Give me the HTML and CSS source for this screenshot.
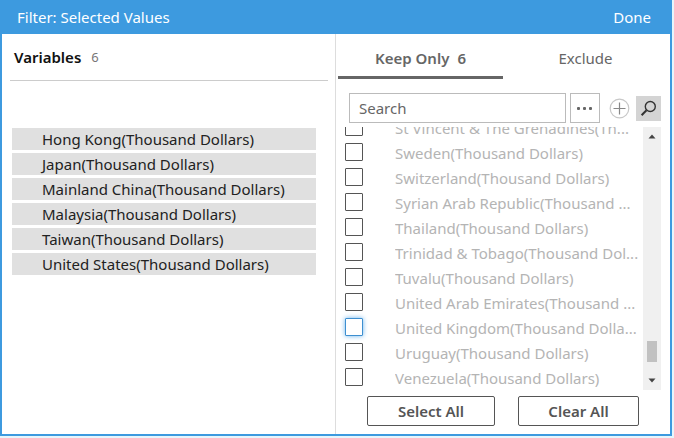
FILE: index.html
```html
<!DOCTYPE html>
<html lang="en">
<head>
<meta charset="utf-8">
<title>Filter: Selected Values</title>
<link rel="stylesheet" href="styles.css">
</head>
<body>
<main class="dialog">
  <header class="titlebar">
    <h1 class="title">Filter: Selected Values</h1>
    <button class="done" type="button">Done</button>
  </header>
  <div class="panes">
    <section class="selected">
      <div class="selected-head">
        <h2 class="selected-title">Variables</h2>
        <span class="count">6</span>
      </div>
      <ul class="chips">
        <li class="chip">Hong Kong(Thousand Dollars)</li>
        <li class="chip">Japan(Thousand Dollars)</li>
        <li class="chip">Mainland China(Thousand Dollars)</li>
        <li class="chip">Malaysia(Thousand Dollars)</li>
        <li class="chip">Taiwan(Thousand Dollars)</li>
        <li class="chip">United States(Thousand Dollars)</li>
      </ul>
    </section>
    <section class="picker">
      <div class="tabs" role="tablist">
        <button class="tab tab-active" type="button" role="tab" aria-selected="true">Keep Only<span class="tab-count">6</span></button>
        <button class="tab" type="button" role="tab" aria-selected="false">Exclude</button>
      </div>
      <div class="searchbar">
        <input class="search" type="text" placeholder="Search" aria-label="Search">
        <button class="more" type="button" aria-label="More options">
          <svg width="18" height="6" viewBox="0 0 18 6"><g fill="#666"><rect x="1" y="2" width="3" height="3" rx="1"/><rect x="7" y="2" width="3" height="3" rx="1"/><rect x="13" y="2" width="3" height="3" rx="1"/></g></svg>
        </button>
        <button class="add" type="button" aria-label="Add">
          <svg width="21" height="21" viewBox="0 0 21 21" fill="none"><circle cx="10.5" cy="10.5" r="9.3" stroke="#c8c8c8" stroke-width="1.2"/><path d="M10.5 4.5v12M4.5 10.5h12" stroke="#888" stroke-width="1.2"/></svg>
        </button>
        <button class="find" type="button" aria-label="Find">
          <svg width="25" height="25" viewBox="0 0 25 25" fill="none" stroke="#333"><circle cx="14.3" cy="10.5" r="5" stroke-width="1.4"/><path d="M10.5 14.2L5.6 19.3" stroke-width="2"/></svg>
        </button>
      </div>
      <div class="list">
        <div class="options">
          <label class="option"><input class="box" type="checkbox"><span class="name">St Vincent &amp; The Grenadines(Th...</span></label>
          <label class="option"><input class="box" type="checkbox"><span class="name">Sweden(Thousand Dollars)</span></label>
          <label class="option"><input class="box" type="checkbox"><span class="name">Switzerland(Thousand Dollars)</span></label>
          <label class="option"><input class="box" type="checkbox"><span class="name">Syrian Arab Republic(Thousand ...</span></label>
          <label class="option"><input class="box" type="checkbox"><span class="name">Thailand(Thousand Dollars)</span></label>
          <label class="option"><input class="box" type="checkbox"><span class="name">Trinidad &amp; Tobago(Thousand Dol...</span></label>
          <label class="option"><input class="box" type="checkbox"><span class="name">Tuvalu(Thousand Dollars)</span></label>
          <label class="option"><input class="box" type="checkbox"><span class="name">United Arab Emirates(Thousand ...</span></label>
          <label class="option"><input class="box box-focus" type="checkbox"><span class="name">United Kingdom(Thousand Dolla...</span></label>
          <label class="option"><input class="box" type="checkbox"><span class="name">Uruguay(Thousand Dollars)</span></label>
          <label class="option"><input class="box" type="checkbox"><span class="name">Venezuela(Thousand Dollars)</span></label>
        </div>
        <div class="scrollbar" aria-hidden="true">
          <svg width="8" height="5" viewBox="0 0 8 5"><path d="M0.5 4.5L4 0.5L7.5 4.5Z" fill="#444"/></svg>
          <div class="thumb"></div>
          <svg width="8" height="5" viewBox="0 0 8 5"><path d="M0.5 0.5L4 4.5L7.5 0.5Z" fill="#444"/></svg>
        </div>
      </div>
      <div class="actions">
        <button class="action" type="button">Select All</button>
        <button class="action" type="button">Clear All</button>
      </div>
    </section>
  </div>
</main>
</body>
</html>
```
FILE: styles.css
```css
* {
  box-sizing: border-box;
}

body {
  margin: 0;
  padding: 0 2px 2px 0;
  min-height: 100vh;
  display: flex;
  background: #e6f6fc;
  font-family: "Noto Sans", "Open Sans", sans-serif;
  font-size: 15px;
  line-height: 22px;
  color: #222;
}

button,
input {
  margin: 0;
  padding: 0;
  border: 0;
  background: none;
  font: inherit;
  color: inherit;
}

svg {
  display: block;
}

.dialog {
  flex: 1;
  min-width: 0;
  display: flex;
  flex-direction: column;
  border: 2px solid #3d9adf;
  border-top: 0;
  background: #fff;
}

.titlebar {
  display: flex;
  justify-content: space-between;
  align-items: center;
  height: 34px;
  padding: 0 19px 0 15px;
  background: #3d9adf;
  color: #fff;
}

.title {
  margin: 0;
  font-size: 15px;
  font-weight: 400;
}

.panes {
  flex: 1;
  display: grid;
  grid-template-columns: 333fr 335fr;
}

.selected {
  padding: 0 7px 0 8px;
}

.selected-head {
  display: flex;
  align-items: center;
  gap: 10px;
  height: 47px;
  padding-left: 4px;
  border-bottom: 1px solid #ccc;
}

.selected-title {
  margin: 0;
  font-size: 15px;
  font-weight: 600;
  color: #111;
}

.count {
  font-size: 13px;
  color: #777;
}

.chips {
  display: flex;
  flex-direction: column;
  gap: 3px;
  margin: 47px 12px 0 2px;
  padding: 0;
  list-style: none;
}

.chip {
  padding-left: 30px;
  background: #e0e0e0;
}

.picker {
  display: flex;
  flex-direction: column;
  min-width: 0;
  padding: 0 9px 0 2px;
  border-left: 1px solid #ddd;
}

.tabs {
  display: grid;
  grid-template-columns: 1fr 1fr;
  height: 45px;
  margin-right: -7px;
  color: #666;
}

.tab {
  padding-top: 6px;
  border-bottom: 3px solid transparent;
}

.tab-active {
  border-color: #666;
  font-weight: 600;
}

.tab-count {
  margin-left: 8px;
}

.searchbar {
  display: flex;
  align-items: center;
  height: 30px;
  margin: 14px 0 4px 11px;
}

.search {
  flex: 1;
  min-width: 0;
  height: 30px;
  padding: 0 9px;
  border: 1px solid #bbb;
}

.search::placeholder {
  color: #666;
  opacity: 1;
}

.more {
  display: grid;
  place-items: center;
  width: 30px;
  height: 30px;
  margin-left: 4px;
  border: 1px solid #bbb;
}

.add {
  margin: 0 6px 0 9px;
}

.find {
  background: #d4d4d4;
}

.list {
  display: flex;
  height: 263px;
}

.options {
  flex: 1;
  min-width: 0;
  display: flex;
  flex-direction: column;
  justify-content: flex-end;
  overflow: hidden;
  padding: 0 4px 0 7px;
}

.option {
  flex: none;
  display: flex;
  align-items: center;
  height: 25px;
  color: #b4b4b4;
}

.box {
  flex: none;
  appearance: none;
  width: 18px;
  height: 18px;
  margin-bottom: 1px;
  border: 1px solid #555;
  border-radius: 1px;
  background: #fff;
}

.box-focus {
  border-color: #3d8fd0;
  box-shadow: 0 0 5px #6ab4ee;
}

.name {
  flex: 1;
  min-width: 0;
  margin-left: 32px;
  overflow: hidden;
  white-space: nowrap;
  text-overflow: ellipsis;
}

.scrollbar {
  display: flex;
  flex-direction: column;
  align-items: center;
  width: 18px;
  padding: 7px 0;
  background: #f0f0f0;
}

.thumb {
  width: 10px;
  height: 21px;
  margin: auto 0 16px;
  background: #c1c1c1;
}

.actions {
  display: grid;
  grid-template-columns: 128fr 121fr;
  gap: 23px;
  margin: 6px 22px 8px 29px;
}

.action {
  height: 30px;
  border: 1px solid #555;
  border-radius: 2px;
  font-weight: 600;
  color: #555;
}
```
